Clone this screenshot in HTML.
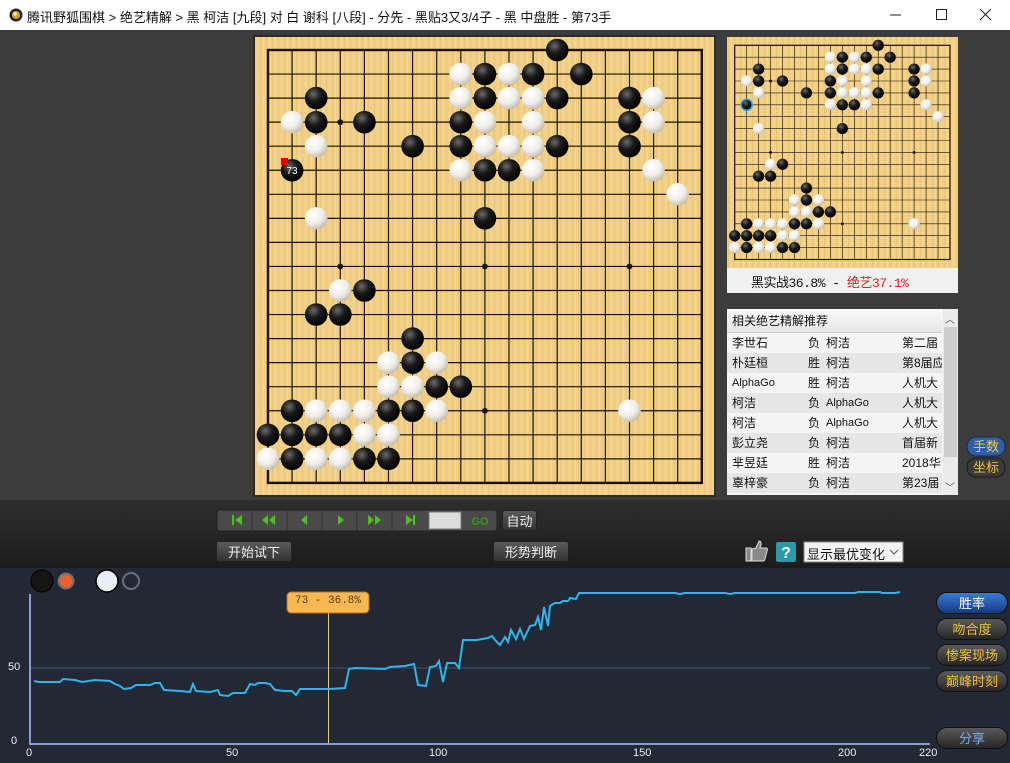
<!DOCTYPE html>
<html><head><meta charset="utf-8">
<style>
*{margin:0;padding:0;box-sizing:border-box}
body{width:1010px;height:763px;overflow:hidden;background:#3c3c3c;position:relative;font-family:"Liberation Sans","Noto Sans CJK SC",sans-serif;}
.abs{position:absolute}
#title{left:0;top:0;width:1010px;height:30px;background:#fff;font-size:13px;color:#111;}
#title span.t{position:absolute;left:27px;top:7px;white-space:nowrap}
.btn{position:absolute;height:21px;border-radius:3px;background:linear-gradient(#5a5a5a,#333);color:#eee;font-size:13px;text-align:center;line-height:21px;border:1px solid #222;}
.rb{position:absolute;left:936px;width:72px;height:22px;border-radius:11px;background:linear-gradient(#5a5a5a,#262626);color:#f0c040;font-size:13px;text-align:center;line-height:22px;border:1px solid #111}
.list{left:727px;top:309px;width:231px;height:186px;background:#f4f4f4;font-size:12px;color:#111;overflow:hidden}
.row{position:absolute;left:0;width:215px;height:20px;line-height:20px;white-space:nowrap;overflow:hidden}
.row span{position:absolute}
.lbl{position:absolute;color:#eee;font-size:11px;font-family:"Liberation Sans",sans-serif}
</style></head><body>
<div id="title" class="abs">
<svg class="abs" style="left:9px;top:8px" width="14" height="14"><circle cx="7" cy="7" r="6.5" fill="#222"/><circle cx="7" cy="7" r="4" fill="#d8a020"/><circle cx="6" cy="6" r="1.8" fill="#fff3b0"/></svg>
<span class="t">腾讯野狐围棋 &gt; 绝艺精解 &gt; 黑 柯洁 [九段] 对 白 谢科 [八段] - 分先 - 黑贴3又3/4子 - 黑 中盘胜 - 第73手</span>
<svg class="abs" style="left:880px;top:8px" width="120" height="14"><line x1="10" y1="7" x2="21" y2="7" stroke="#222"/><rect x="56.5" y="1.5" width="10" height="10" fill="none" stroke="#222"/><path d="M100 1 L111 12 M111 1 L100 12" stroke="#222"/></svg>
</div>

<!-- lower dark band -->
<div class="abs" style="left:0;top:500px;width:1010px;height:68px;background:linear-gradient(#2e2e2e,#1c1c1c)"></div>
<div class="abs" style="left:0;top:568px;width:1010px;height:195px;background:#222834"></div>

<svg class="abs" style="left:0;top:0" width="1010" height="763">
<defs>
<radialGradient id="gb" cx=".38" cy=".32" r=".7"><stop offset="0" stop-color="#6a6a6a"/><stop offset=".45" stop-color="#1a1a1a"/><stop offset="1" stop-color="#000"/></radialGradient>
<radialGradient id="gw" cx=".38" cy=".32" r=".75"><stop offset="0" stop-color="#fff"/><stop offset=".55" stop-color="#f0eee8"/><stop offset="1" stop-color="#bdb5a3"/></radialGradient>
<circle id="b" r="0.47" fill="url(#gb)"/>
<circle id="w" r="0.47" fill="url(#gw)"/>
<pattern id="wood" width="6" height="10" patternUnits="userSpaceOnUse"><rect width="6" height="10" fill="#f1cf84"/><rect x="2" width="1" height="10" fill="#ebc67a"/><rect x="5" width="1" height="10" fill="#f5d693"/></pattern>
<g id="grid">
<path d="M0 0V18M1 0V18M2 0V18M3 0V18M4 0V18M5 0V18M6 0V18M7 0V18M8 0V18M9 0V18M10 0V18M11 0V18M12 0V18M13 0V18M14 0V18M15 0V18M16 0V18M17 0V18M18 0V18M0 0H18M0 1H18M0 2H18M0 3H18M0 4H18M0 5H18M0 6H18M0 7H18M0 8H18M0 9H18M0 10H18M0 11H18M0 12H18M0 13H18M0 14H18M0 15H18M0 16H18M0 17H18M0 18H18" stroke="#1a1208" stroke-width="0.05" fill="none"/>
<rect x="0" y="0" width="18" height="18" fill="none" stroke="#1a1208" stroke-width="0.1"/>
<g fill="#1a1208"><circle cx="3" cy="3" r=".12"/><circle cx="9" cy="3" r=".12"/><circle cx="15" cy="3" r=".12"/><circle cx="3" cy="9" r=".12"/><circle cx="9" cy="9" r=".12"/><circle cx="15" cy="9" r=".12"/><circle cx="3" cy="15" r=".12"/><circle cx="9" cy="15" r=".12"/><circle cx="15" cy="15" r=".12"/></g>
</g>
<g id="stones">
<use href="#b" x="12" y="0"/><use href="#b" x="9" y="1"/><use href="#b" x="11" y="1"/><use href="#b" x="13" y="1"/><use href="#b" x="2" y="2"/><use href="#b" x="9" y="2"/><use href="#b" x="12" y="2"/><use href="#b" x="15" y="2"/><use href="#b" x="2" y="3"/><use href="#b" x="4" y="3"/><use href="#b" x="8" y="3"/><use href="#b" x="15" y="3"/><use href="#b" x="6" y="4"/><use href="#b" x="8" y="4"/><use href="#b" x="12" y="4"/><use href="#b" x="15" y="4"/><use href="#b" x="1" y="5"/><use href="#b" x="9" y="5"/><use href="#b" x="10" y="5"/><use href="#b" x="9" y="7"/><use href="#b" x="4" y="10"/><use href="#b" x="2" y="11"/><use href="#b" x="3" y="11"/><use href="#b" x="6" y="12"/><use href="#b" x="6" y="13"/><use href="#b" x="7" y="14"/><use href="#b" x="8" y="14"/><use href="#b" x="1" y="15"/><use href="#b" x="5" y="15"/><use href="#b" x="6" y="15"/><use href="#b" x="0" y="16"/><use href="#b" x="1" y="16"/><use href="#b" x="2" y="16"/><use href="#b" x="3" y="16"/><use href="#b" x="1" y="17"/><use href="#b" x="4" y="17"/><use href="#b" x="5" y="17"/>
<use href="#w" x="8" y="1"/><use href="#w" x="10" y="1"/><use href="#w" x="8" y="2"/><use href="#w" x="10" y="2"/><use href="#w" x="11" y="2"/><use href="#w" x="16" y="2"/><use href="#w" x="1" y="3"/><use href="#w" x="9" y="3"/><use href="#w" x="11" y="3"/><use href="#w" x="16" y="3"/><use href="#w" x="2" y="4"/><use href="#w" x="9" y="4"/><use href="#w" x="10" y="4"/><use href="#w" x="11" y="4"/><use href="#w" x="8" y="5"/><use href="#w" x="11" y="5"/><use href="#w" x="16" y="5"/><use href="#w" x="17" y="6"/><use href="#w" x="2" y="7"/><use href="#w" x="3" y="10"/><use href="#w" x="5" y="13"/><use href="#w" x="7" y="13"/><use href="#w" x="5" y="14"/><use href="#w" x="6" y="14"/><use href="#w" x="7" y="15"/><use href="#w" x="2" y="15"/><use href="#w" x="3" y="15"/><use href="#w" x="4" y="15"/><use href="#w" x="15" y="15"/><use href="#w" x="4" y="16"/><use href="#w" x="5" y="16"/><use href="#w" x="0" y="17"/><use href="#w" x="2" y="17"/><use href="#w" x="3" y="17"/>
</g>
</defs>
<!-- main board -->
<rect x="253" y="35" width="463" height="462" fill="#2a2a2a"/>
<rect x="255" y="37" width="459" height="458" fill="url(#wood)"/>
<g transform="translate(268,50) scale(24.1,24.05)"><use href="#grid"/><use href="#stones"/></g>
<rect x="281" y="158" width="7" height="7" fill="#e00000"/>
<text x="292" y="174" fill="#fff" font-size="10" text-anchor="middle" font-family="Liberation Sans">73</text>
<!-- small board -->
<rect x="727" y="37" width="231" height="231" fill="url(#wood)"/>
<g transform="translate(734.7,45.3) scale(11.96,11.9)"><use href="#grid"/><use href="#stones"/></g>
<circle cx="746.7" cy="104.8" r="5.5" fill="none" stroke="#2aa0e0" stroke-width="1.5"/>
<rect x="727" y="268" width="231" height="25" fill="#f0f0f0"/>
<!-- side buttons 手数 坐标 -->
<rect x="967" y="437" width="38" height="19" rx="9" fill="#2f5fa8" stroke="#1a2a40"/>
<rect x="967" y="458" width="38" height="19" rx="9" fill="#3a3a3a" stroke="#1a1a1a"/>
<!-- nav bar -->
<rect x="217" y="510" width="280" height="21" rx="3" fill="#4a4a4a" stroke="#222"/>
<g fill="#4cc020">
<rect x="232" y="515" width="2" height="10"/><path d="M242 515v10l-7-5z"/>
<path d="M268 515v10l-6-5zM275 515v10l-6-5z"/>
<path d="M307 515v10l-6-5z"/>
<path d="M338 515v10l6-5z"/>
<path d="M368 515v10l6-5zM375 515v10l6-5z"/>
<path d="M406 515v10l7-5z"/><rect x="413" y="515" width="2" height="10"/>
</g>
<g stroke="#333"><line x1="252" y1="511" x2="252" y2="530"/><line x1="287" y1="511" x2="287" y2="530"/><line x1="322" y1="511" x2="322" y2="530"/><line x1="357" y1="511" x2="357" y2="530"/><line x1="392" y1="511" x2="392" y2="530"/></g>
<rect x="429" y="512" width="32" height="17" fill="#ddd" stroke="#777"/>
<text x="480" y="525" fill="#3a9a10" font-size="11" font-weight="bold" text-anchor="middle" font-family="Liberation Sans">GO</text>
<!-- thumb & help -->
<path d="M746 548h5v13h-5zM752 549l4-1 3-7c2 0 2 2 2 4l-1 3h6c1 0 2 1 1 3l-2 8c0 1-1 2-2 2h-11z" fill="#888" stroke="#ddd" stroke-width="1"/>
<rect x="776" y="542" width="20" height="20" rx="2" fill="#2a9aa8"/>
<text x="786" y="558" fill="#fff" font-size="16" font-weight="bold" text-anchor="middle" font-family="Liberation Sans">?</text>
<rect x="804" y="542" width="99" height="20" fill="#f4f4f4" stroke="#888"/>
<path d="M890 550l4 4 4-4" stroke="#555" fill="none"/>
<!-- chart -->
<circle cx="42" cy="581" r="11" fill="#151515" stroke="#000" stroke-width="1"/>
<circle cx="66" cy="581" r="7.5" fill="#e8602a" stroke="#6a7080" stroke-width="2"/>
<circle cx="107" cy="581" r="11" fill="#e8eef5" stroke="#000" stroke-width="1.5"/>
<circle cx="131" cy="581" r="8" fill="#222834" stroke="#6a7080" stroke-width="2"/>
<line x1="30" y1="668" x2="930" y2="668" stroke="#47506a" stroke-width="1"/>
<line x1="30" y1="594" x2="30" y2="744" stroke="#8a9ad0" stroke-width="2"/>
<line x1="29" y1="744" x2="930" y2="744" stroke="#8a9ad0" stroke-width="2"/>
<line x1="328.5" y1="613" x2="328.5" y2="743" stroke="#f0c878" stroke-width="1"/>
<polyline fill="none" stroke="#30b4ec" stroke-width="2" points="34,681 39,682 60,682 63,679 75,680 82,682 95,680 110,681 115,684 120,686 124,689 131,688 136,685 150,685 155,683 160,683 164,690 180,691 190,692 193,684 196,691 210,692 218,690 220,695 228,696 233,693 245,693 250,684 255,685 258,683 265,683 270,684 275,690 285,691 292,691 296,695 300,689 330,689 345,688 349,669 355,668 385,669 390,667 405,666 414,664 418,685 426,686 430,667 436,666 439,661 443,682 447,663 455,663 459,668 463,640 477,640 488,638 492,636 495,640 500,645 505,637 508,642 511,630 516,639 520,629 524,639 530,626 535,625 538,617 541,630 544,607 548,626 550,606 555,603 560,603 563,601 568,601 570,598 576,599 579,593 675,593 680,594 685,593 725,593 730,594 735,593 855,593 858,592 880,592 882,593 895,593 900,592"/>
<rect x="287" y="592" width="82" height="21" rx="4" fill="#f8b850" stroke="#b07020"/>
</svg>

<!-- small board label -->
<div class="abs" style="left:751px;top:272px;font-size:13px;font-family:'Liberation Mono','Noto Sans CJK SC',monospace;color:#111;white-space:nowrap;letter-spacing:-0.5px">黑实战36.8% - <span style="color:#e02020">绝艺37.1%</span></div>

<!-- list -->
<div class="abs list">
<div style="position:absolute;left:0;top:0;width:215px;height:24px;background:linear-gradient(#fafafa,#e6e6e6);border-bottom:1px solid #ccc;line-height:24px;padding-left:5px;font-size:12px">相关绝艺精解推荐</div>
<div style="position:absolute;left:216px;top:0;width:15px;height:186px;background:#eaeaea"></div>
<div style="position:absolute;left:217px;top:18px;width:13px;height:130px;background:#cdcdcd"></div>
<div style="position:absolute;left:218px;top:2px;font-size:10px;color:#555">︿</div>
<div style="position:absolute;left:218px;top:170px;font-size:10px;color:#555">﹀</div>
<div class="row" style="top:24px;background:#f4f4f4"><span style="left:5px">李世石</span><span style="left:81px">负</span><span style="left:99px">柯洁</span><span style="left:175px">第二届</span></div>
<div class="row" style="top:44px;background:#e6e6e6"><span style="left:5px">朴廷桓</span><span style="left:81px">胜</span><span style="left:99px">柯洁</span><span style="left:175px">第8届应</span></div>
<div class="row" style="top:64px;background:#f4f4f4"><span style="left:5px;font-size:11px">AlphaGo</span><span style="left:81px">胜</span><span style="left:99px">柯洁</span><span style="left:175px">人机大</span></div>
<div class="row" style="top:84px;background:#e6e6e6"><span style="left:5px">柯洁</span><span style="left:81px">负</span><span style="left:99px;font-size:11px">AlphaGo</span><span style="left:175px">人机大</span></div>
<div class="row" style="top:104px;background:#f4f4f4"><span style="left:5px">柯洁</span><span style="left:81px">负</span><span style="left:99px;font-size:11px">AlphaGo</span><span style="left:175px">人机大</span></div>
<div class="row" style="top:124px;background:#e6e6e6"><span style="left:5px">彭立尧</span><span style="left:81px">负</span><span style="left:99px">柯洁</span><span style="left:175px">首届新</span></div>
<div class="row" style="top:144px;background:#f4f4f4"><span style="left:5px">芈昱廷</span><span style="left:81px">胜</span><span style="left:99px">柯洁</span><span style="left:175px">2018华</span></div>
<div class="row" style="top:164px;background:#e6e6e6"><span style="left:5px">辜梓豪</span><span style="left:81px">负</span><span style="left:99px">柯洁</span><span style="left:175px">第23届</span></div>
</div>

<div class="abs" style="left:967px;top:438px;width:38px;text-align:center;color:#f0d040;font-size:13px;line-height:18px">手数</div>
<div class="abs" style="left:967px;top:459px;width:38px;text-align:center;color:#f0c040;font-size:13px;line-height:18px">坐标</div>

<div class="btn" style="left:502px;top:510px;width:35px">自动</div>
<div class="btn" style="left:216px;top:541px;width:76px">开始试下</div>
<div class="btn" style="left:493px;top:541px;width:76px">形势判断</div>
<div class="abs" style="left:807px;top:544px;font-size:13px;color:#111">显示最优变化</div>

<div class="abs" style="left:287px;top:595px;width:82px;text-align:center;font-size:11px;color:#5a3a10;font-family:'Liberation Mono',monospace">73 - 36.8%</div>

<div class="lbl" style="left:8px;top:661px">50</div>
<div class="lbl" style="left:11px;top:735px">0</div>
<div class="lbl" style="left:26px;top:747px">0</div>
<div class="lbl" style="left:226px;top:747px">50</div>
<div class="lbl" style="left:429px;top:747px">100</div>
<div class="lbl" style="left:633px;top:747px">150</div>
<div class="lbl" style="left:838px;top:747px">200</div>
<div class="lbl" style="left:919px;top:747px">220</div>

<div class="rb" style="top:592px;background:linear-gradient(#3a7ad8,#153a80);color:#fff">胜率</div>
<div class="rb" style="top:618px">吻合度</div>
<div class="rb" style="top:644px">惨案现场</div>
<div class="rb" style="top:670px">巅峰时刻</div>
<div class="rb" style="top:727px;color:#7ab0f0">分享</div>
</body></html>
